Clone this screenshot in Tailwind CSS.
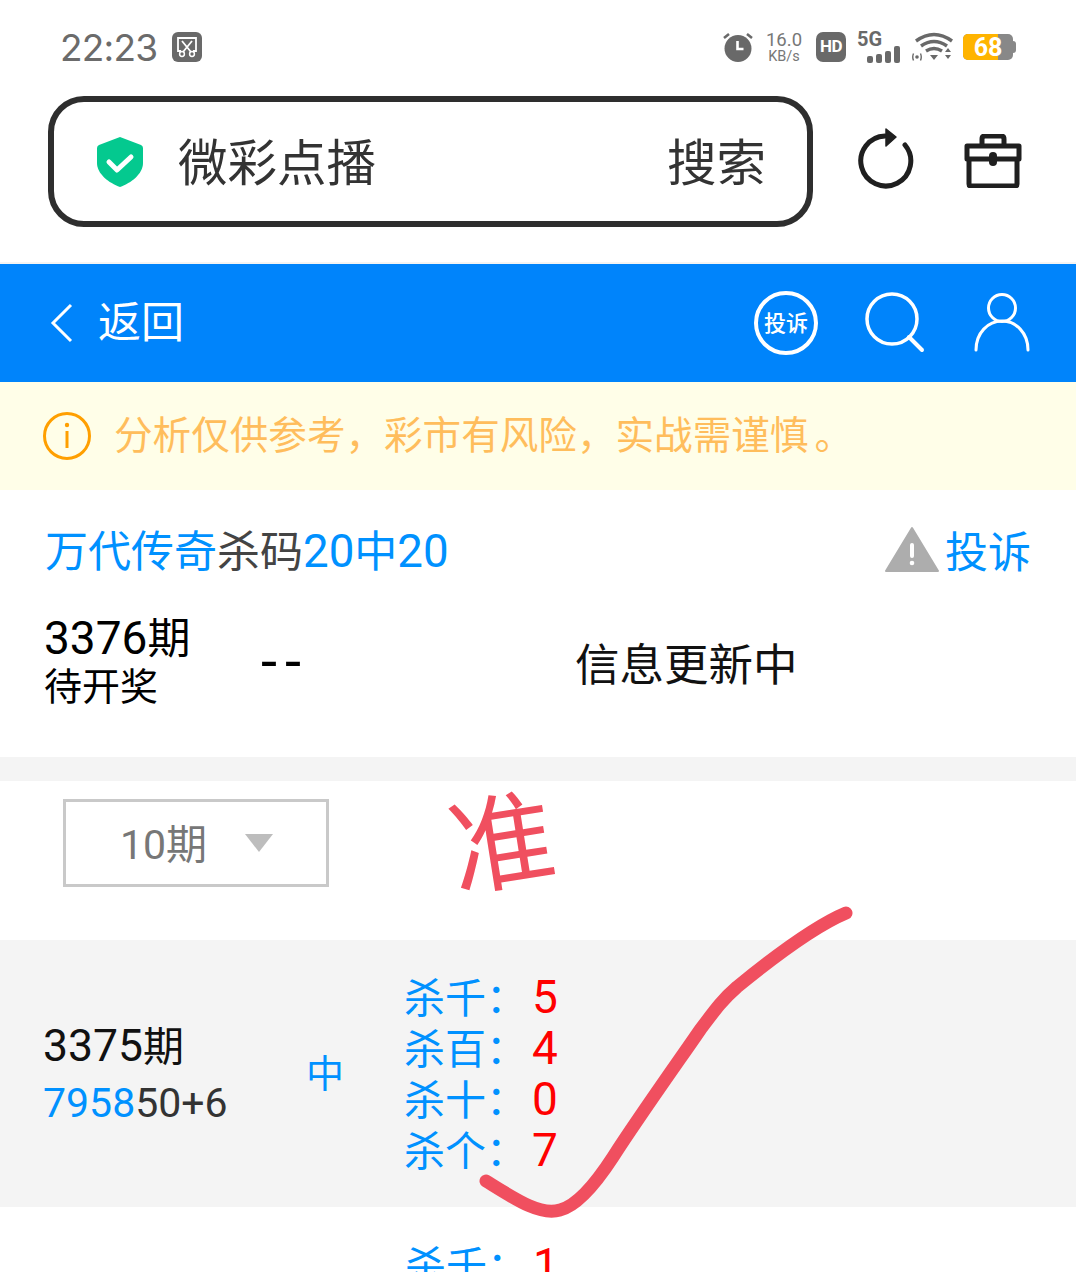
<!DOCTYPE html>
<html lang="zh">
<head>
  <meta charset="UTF-8" />
  <title>微彩点播</title>
  <script src="https://cdn.jsdelivr.net/npm/@tailwindcss/browser@4"></script>
</head>
<body class="relative h-[1272px] overflow-hidden bg-white font-['Roboto','Noto_Sans_CJK_SC',sans-serif]">

  <!-- status bar -->
  <div class="flex h-[96px] items-center pb-[2px] pl-[60px] pr-[60px]">
    <span class="text-[37px] leading-none text-[#6b6b6b] font-['Inter','Roboto',sans-serif] tracking-[-0.8px]">22:23</span>
    <svg class="ml-[15px]" width="30" height="30" viewBox="0 0 30 30">
      <rect width="30" height="30" rx="6" fill="#696969" />
      <path d="M9 19H6V6h18v13h-3" fill="none" stroke="#fff" stroke-width="1.8" />
      <path d="M10 9l9 11M20 9l-9 11" stroke="#fff" stroke-width="1.8" />
      <circle cx="10" cy="22" r="2.4" fill="none" stroke="#fff" stroke-width="1.5" />
      <circle cx="20" cy="22" r="2.4" fill="none" stroke="#fff" stroke-width="1.5" />
    </svg>
    <div class="ml-auto flex items-center">
      <svg width="32" height="32" viewBox="0 0 32 32" class="mr-[12px]">
        <circle cx="16" cy="17.500" r="13.500" fill="#696969" />
        <path d="M15.500 10v8h6" fill="none" stroke="#fff" stroke-width="2.600" />
        <path d="M2 7l5-4M30 7l-5-4" stroke="#696969" stroke-width="2.600" />
      </svg>
      <div class="mr-[14px] flex w-[36px] flex-col items-center gap-[2px] text-[#777]">
        <span class="h-[16px] text-[18.500px] leading-[16px]">16.0</span>
        <span class="h-[13px] text-[14.500px] leading-[13px]">KB/s</span>
      </div>
      <div class="mr-[11px] flex h-[30px] w-[30px] items-center justify-center rounded-[7px] bg-[#696969] text-[17px] font-bold tracking-[-0.5px] text-white">HD</div>
      <div class="relative mr-[10px] h-[32px] w-[45px]">
        <span class="absolute left-0 top-[-2px] text-[20px] font-bold leading-none text-[#696969]">5G</span>
        <svg class="absolute left-[10px] bottom-0" width="35" height="18" viewBox="0 0 35 18">
          <rect x="0" y="11" width="6" height="7" rx="2" fill="#696969" />
          <rect x="9" y="9" width="6" height="9" rx="2" fill="#696969" />
          <rect x="18" y="6" width="6" height="12" rx="2" fill="#696969" />
          <rect x="27" y="1" width="6" height="17" rx="2" fill="#696969" />
        </svg>
      </div>
      <svg class="mr-[9px]" width="42" height="30" viewBox="0 0 42 30">
        <path d="M4 9q18-13 36 0M9 14q13-9 26 0M14 19q8-5 16 0" fill="none" stroke="#696969" stroke-width="3.400" />
        <path d="M18 23h8l-4 5zM33 20h6l-3-4zM33 23h6l-3 4z" fill="#696969" />
        <circle cx="5" cy="25" r="1.800" fill="#696969" />
        <path d="M1.500 21.500q-1.500 3.500 0 7M8.500 21.500q1.500 3.500 0 7" fill="none" stroke="#696969" stroke-width="1.400" />
      </svg>
      <div class="relative flex h-[26px] w-[50px] items-center justify-center overflow-hidden rounded-[5px] bg-[#888]">
        <div class="absolute inset-y-0 left-0 w-[35px] bg-[#ffb400]"></div>
        <span class="relative text-[25px] font-bold leading-none text-white">68</span>
      </div>
      <div class="h-[12px] w-[3px] rounded-r-sm bg-[#888]"></div>
    </div>
  </div>

  <!-- browser address row -->
  <div class="flex h-[168px] items-start border-b-2 border-[#f4f4f4] pl-[48px]">
    <div class="flex h-[131px] w-[765px] items-center rounded-[36px] border-[6px] border-[#2e2e2e] pl-[43px] pr-[41px]">
      <svg width="46" height="50" viewBox="0 0 46 50">
        <path d="M23 0l21 8q2 1 2 3v15c0 11-12 20-23 24C12 46 0 37 0 26V11q0-2 2-3z" fill="#04c98f" />
        <path d="M12 25l8 8 14-13" fill="none" stroke="#fff" stroke-width="5" stroke-linecap="round" stroke-linejoin="round" />
      </svg>
      <span class="ml-[35px] mt-[6px] text-[49.500px] leading-none text-[#333]">微彩点播</span>
      <span class="ml-auto mt-[6px] text-[49.500px] leading-none text-[#333]">搜索</span>
    </div>
    <svg class="ml-[41px] mt-[30px]" width="60" height="66" viewBox="0 0 60 66">
      <path d="M51 19a25 25 0 1 1-20-9" fill="none" stroke="#1f1f1f" stroke-width="5" stroke-linecap="round" />
      <path d="M32 3l10 8-10 9z" fill="#1f1f1f" stroke="#1f1f1f" stroke-width="1.500" stroke-linejoin="round" />
    </svg>
    <svg class="ml-[50px] mt-[38px]" width="58" height="54" viewBox="0 0 58 54">
      <path d="M18 10V5q0-3 3-3h16q3 0 3 3v5" fill="none" stroke="#1f1f1f" stroke-width="5" />
      <path d="M5 27V50q0 2 2 2h44q2 0 2-2V27" fill="none" stroke="#1f1f1f" stroke-width="5" />
      <path d="M3 12h52v13H3z" fill="none" stroke="#1f1f1f" stroke-width="5" stroke-linejoin="round" />
      <rect x="25" y="18" width="8" height="14" rx="4" fill="#1f1f1f" />
    </svg>
  </div>

  <!-- blue header -->
  <div class="flex h-[118px] items-center bg-[#0084fb] pl-[50px] pr-[44px] text-white">
    <svg width="24" height="40" viewBox="0 0 24 40">
      <path d="M21 2L3 20l18 18" fill="none" stroke="#fff" stroke-width="3" />
    </svg>
    <span class="ml-[24px] text-[43px] leading-none">返回</span>
    <div class="ml-auto flex h-[64px] w-[64px] items-center justify-center rounded-full border-[4px] border-white text-[22px] font-medium">投诉</div>
    <svg class="ml-[46px]" width="62" height="62" viewBox="0 0 62 62">
      <circle cx="28" cy="27" r="25" fill="none" stroke="#fff" stroke-width="3.500" />
      <path d="M45 45l13 13" stroke="#fff" stroke-width="4" stroke-linecap="round" />
    </svg>
    <svg class="ml-[48px]" width="58" height="60" viewBox="0 0 58 60">
      <circle cx="28" cy="15" r="13.500" fill="none" stroke="#fff" stroke-width="3" />
      <path d="M2 57c0-17 12-29 26-29s26 12 26 29" fill="none" stroke="#fff" stroke-width="3" stroke-linecap="round" />
    </svg>
  </div>

  <!-- notice -->
  <div class="flex h-[108px] items-center bg-[#fffee8] pl-[42px]">
    <svg width="50" height="50" viewBox="0 0 50 50">
      <circle cx="25" cy="25" r="22.500" fill="none" stroke="#ff9f00" stroke-width="3" />
      <circle cx="25" cy="14" r="2.200" fill="#ff9f00" />
      <rect x="23.500" y="20" width="3" height="17" fill="#ff9f00" />
    </svg>
    <span class="ml-[22px] whitespace-nowrap text-[38.600px] leading-none text-[#ffbd5c]">分析仅供参考，彩市有风险，实战需谨慎<span class="ml-[6px]">。</span></span>
  </div>

  <!-- current issue -->
  <div class="h-[267px] pl-[45px] pr-[45px]">
    <div class="flex items-center pt-[36px]">
      <span class="text-[43px] leading-[50px] text-[#0091ff] whitespace-nowrap">万代传奇<span class="text-[#444]">杀码</span><span class="text-[45.700px]">20</span>中<span class="text-[45.700px]">20</span></span>
      <svg class="ml-auto mt-[-6px] mr-[-5px]" width="54" height="46" viewBox="0 0 54 46">
        <path d="M27 2L53 45H1z" fill="#adadad" stroke="#adadad" stroke-width="2" stroke-linejoin="round" />
        <rect x="25" y="17" width="4" height="15" rx="2" fill="#fff" />
        <circle cx="27" cy="37" r="2.300" fill="#fff" />
      </svg>
      <span class="ml-[11px] mt-[2px] text-[43px] leading-[50px] text-[#0091ff]">投诉</span>
    </div>
    <div class="ml-[-1px] mt-[35px] flex items-center">
      <div class="w-[217px] text-black">
        <div class="text-[43px] leading-[50px]"><span class="text-[46px]">3376</span>期</div>
        <div class="mt-[-1px] text-[38px] leading-[48px]">待开奖</div>
      </div>
      <span class="mt-[-2px] w-[314px] text-[58px] leading-none tracking-[8px] text-black">--</span>
      <span class="mt-[8px] text-[44.500px] leading-none text-[#111]">信息更新中</span>
    </div>
  </div>

  <div class="h-[24px] bg-[#f4f4f4]"></div>

  <!-- period select -->
  <div class="h-[159px] pl-[63px] pt-[18px]">
    <div class="flex h-[88px] w-[266px] items-center border-[3px] border-[#c9c9c9] pl-[54px]">
      <span class="mt-[4px] text-[41px] leading-none text-[#777]">10期</span>
      <span class="ml-[38px] mt-[-1px] h-0 w-0 border-x-[14px] border-t-[18px] border-x-transparent border-t-[#bdbdbd]"></span>
    </div>
  </div>

  <!-- history rows -->
  <div class="flex h-[267px] items-center bg-[#f4f4f4] pl-[43px]">
    <div class="mt-[2px] w-[263px]">
      <div class="text-[41px] leading-[56px] text-[#111]"><span class="text-[44.500px]">3375</span>期</div>
      <div class="text-[41px] leading-[56px] text-[#333]"><span class="text-[#0091ff]">7958</span>50+6</div>
    </div>
    <span class="mt-[2px] w-[98px] text-[38px] text-[#0091ff]">中</span>
    <div class="text-[41px] leading-[51px] text-[#0091ff]">
      <div class="flex h-[51px] items-baseline"><span class="w-[128px]">杀千：</span><span class="text-[46px] text-[#f00]">5</span></div>
      <div class="flex h-[51px] items-baseline"><span class="w-[128px]">杀百：</span><span class="text-[46px] text-[#f00]">4</span></div>
      <div class="flex h-[51px] items-baseline"><span class="w-[128px]">杀十：</span><span class="text-[46px] text-[#f00]">0</span></div>
      <div class="flex h-[51px] items-baseline"><span class="w-[128px]">杀个：</span><span class="text-[46px] text-[#f00]">7</span></div>
    </div>
  </div>
  <div class="pl-[405px] pt-[33px] text-[41px] leading-[51px] text-[#0091ff]">
    <div class="flex items-baseline"><span class="w-[128px]">杀千：</span><span class="text-[46px] text-[#f00]">1</span></div>
  </div>

  <!-- hand-drawn marks on top of the screenshot -->
  <span class="absolute left-[450px] top-[782px] -rotate-[9deg] text-[105px] leading-[128px] text-[#f04f5f]">准</span>
  <svg class="absolute left-0 top-0" width="1076" height="1272" viewBox="0 0 1076 1272">
    <path d="M846 913C815 926 770 960 737 987C722 1000 715 1010 700 1030C685 1052 640 1115 613 1157C600 1177 580 1205 560 1210C540 1216 515 1199 486 1181" fill="none" stroke="#f04f5f" stroke-width="13" stroke-linecap="round" stroke-linejoin="round" />
  </svg>

</body>
</html>
